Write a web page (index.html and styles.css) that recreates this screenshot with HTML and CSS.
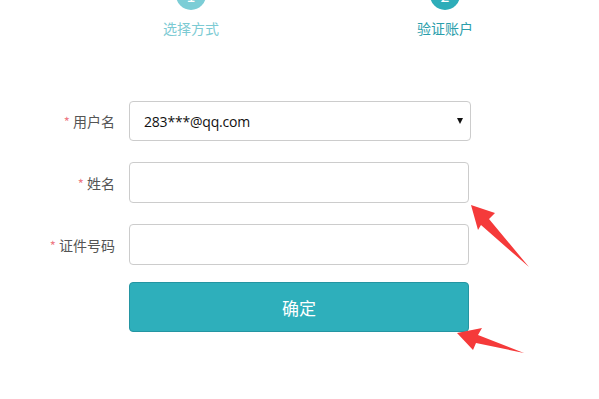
FILE: index.html
```html
<!DOCTYPE html>
<html lang="zh">
<head>
<meta charset="utf-8">
<title>验证账户</title>
<link rel="stylesheet" href="styles.css">
</head>
<body>
<div class="page">
  <div class="steps">
    <div class="step step-done">
      <div class="circle">1</div>
      <div class="step-label">选择方式</div>
    </div>
    <div class="step step-active">
      <div class="circle">2</div>
      <div class="step-label">验证账户</div>
    </div>
  </div>

  <form class="form">
    <div class="row row-select">
      <label class="label"><span class="req">*</span> 用户名</label>
      <div class="select">
        <span class="select-value">283***@qq.com</span>
        <span class="caret"></span>
      </div>
    </div>
    <div class="row">
      <label class="label"><span class="req">*</span> 姓名</label>
      <input class="input" type="text">
    </div>
    <div class="row">
      <label class="label"><span class="req">*</span> 证件号码</label>
      <input class="input" type="text">
    </div>
    <div class="row row-btn">
      <span class="label"></span>
      <button class="btn" type="button">确定</button>
    </div>
  </form>

  <svg class="arrows" width="599" height="399" viewBox="0 0 599 399">
    <polygon fill="#f53a3a" points="471,205 495,213 489,219 529,267 481,225 478,230"/>
    <polygon fill="#f53a3a" points="457,333 482,328 478,335 524,353 476,343 473,350"/>
  </svg>
</div>
</body>
</html>
```

FILE: styles.css
```css
html, body {
  margin: 0;
  padding: 0;
  background: #ffffff;
}

body {
  font-family: "Microsoft YaHei", "Noto Sans CJK SC", "Noto Sans", sans-serif;
  overflow: hidden;
}

.page {
  position: relative;
  width: 599px;
  height: 399px;
}

.steps {
  display: flex;
  padding-left: 131px;
  gap: 134px;
}

.step {
  width: 120px;
  display: flex;
  flex-direction: column;
  align-items: center;
}

.circle {
  width: 30px;
  height: 30px;
  margin-top: -20px;
  border-radius: 50%;
  color: #ffffff;
  font-size: 16px;
  line-height: 30px;
  text-align: center;
}

.step-done .circle {
  background: #7ccdd6;
}

.step-active .circle {
  background: #2eadb9;
}

.step-label {
  margin-top: 10px;
  font-size: 14px;
  line-height: 17px;
}

.step-done .step-label {
  color: #7ccad3;
}

.step-active .step-label {
  color: #2b9eab;
}

.form {
  margin: 64px 0 0 0;
  display: flex;
  flex-direction: column;
}

.row {
  display: flex;
  align-items: center;
  margin-bottom: 21px;
}

.row-btn {
  margin-top: -4px;
}

.label {
  width: 115px;
  margin-right: 14px;
  text-align: right;
  font-size: 14px;
  color: #555555;
}

.req {
  color: #ee7a85;
  font-size: 13px;
}

.select {
  box-sizing: border-box;
  width: 342px;
  height: 40px;
  border: 1px solid #cccccc;
  border-radius: 4px;
  display: flex;
  align-items: center;
  justify-content: space-between;
  padding: 0 7px 0 14px;
}

.select-value {
  font-family: "Open Sans", "Noto Sans", sans-serif;
  font-size: 14px;
  letter-spacing: -0.2px;
  color: #111111;
}

.caret {
  width: 0;
  height: 0;
  border-left: 3px solid transparent;
  border-right: 3px solid transparent;
  border-top: 6px solid #111111;
}

.input {
  box-sizing: border-box;
  width: 340px;
  height: 41px;
  border: 1px solid #cccccc;
  border-radius: 4px;
  margin: 0;
  padding: 0 12px;
  background: #ffffff;
}

.btn {
  box-sizing: border-box;
  width: 340px;
  height: 50px;
  margin: 0;
  border: 1px solid #2495a2;
  border-radius: 4px;
  background: #2eafbb;
  color: #ffffff;
  font-family: "Microsoft YaHei", "Noto Sans CJK SC", sans-serif;
  font-size: 17px;
  cursor: pointer;
}

.arrows {
  position: absolute;
  left: 0;
  top: 0;
  pointer-events: none;
}
```
